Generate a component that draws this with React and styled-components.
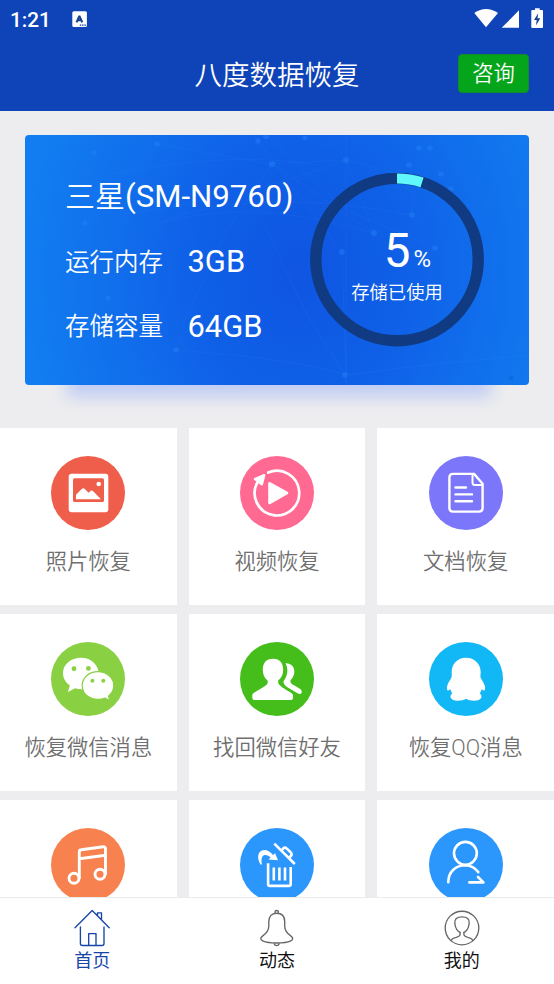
import React from "react";
import styled, { createGlobalStyle } from "styled-components";

const GlobalStyle = createGlobalStyle`
  *, *::before, *::after { box-sizing: border-box; }
  body {
    margin: 0;
    background: #ededef;
    font-family: Roboto, "Noto Sans CJK SC", sans-serif;
    font-weight: 400;
  }
  svg { display: block; flex: none; }
`;

const Screen = styled.div`
  display: flex;
  flex-direction: column;
  width: 554px;
  height: 984px;
  overflow: hidden;
  background: #ededef;
`;

const Header = styled.header`
  flex: none;
  height: 111px;
  background: #0f43b8;
  color: #fff;
`;

const StatusBar = styled.div`
  display: flex;
  align-items: center;
  height: 38px;
  padding: 0 9px 0 10px;
`;

const Clock = styled.span`
  width: 62px;
  padding-top: 1px;
  font-size: 20.8px;
  font-weight: 500;
  line-height: 38px;
`;

const StatusIcons = styled.div`
  display: flex;
  margin-left: auto;
`;

const TitleBar = styled.div`
  display: grid;
  grid-template-columns: 1fr auto 1fr;
  align-items: center;
  height: 73px;
  padding-right: 25px;
  padding-left: 25px;
`;

const Title = styled.h1`
  grid-column: 2;
  margin: 2px 0 0;
  font-size: 27.5px;
  font-weight: 350;
  line-height: 40px;
`;

const ConsultButton = styled.button`
  justify-self: end;
  width: 71px;
  height: 39px;
  margin-top: -2px;
  padding: 1px 0 0;
  border: 1px solid #16892f;
  border-radius: 4px;
  background: #05a51b;
  color: #fff;
  font: inherit;
  font-size: 21.3px;
  font-weight: 350;
  line-height: 36px;
`;

const Content = styled.main`
  flex: 1;
  min-height: 0;
  overflow: hidden;
`;

const CardWrap = styled.section`
  position: relative;
  height: 250px;
  margin: 24px 25px 43px;
  isolation: isolate;

  &::after {
    content: "";
    position: absolute;
    z-index: -1;
    right: 38px;
    bottom: -12px;
    left: 42px;
    height: 40px;
    background: rgba(96, 136, 255, 0.32);
    filter: blur(8px);
  }
`;

const Card = styled.div`
  position: relative;
  display: flex;
  justify-content: space-between;
  height: 250px;
  padding: 38px 45px 0 40px;
  overflow: hidden;
  border-radius: 4px;
  background: radial-gradient(ellipse 275px 330px at 275px 138px, #0f55e2 0%, #0f60e7 38%, #1172ed 76%, #117df1 100%);
  color: #fff;
`;

const Network = styled.svg`
  position: absolute;
  inset: 0;
`;

const Info = styled.div`
  position: relative;
  white-space: nowrap;
`;

const Device = styled.div`
  height: 48px;
  font-size: 30px;
  font-weight: 350;
  line-height: 48px;

  span { font-size: 31.2px; font-weight: 400; }
`;

const Spec = styled.div`
  display: flex;
  align-items: center;
  height: 48px;
  margin-top: 16.5px;
`;

const SpecName = styled.span`
  width: 122.5px;
  margin-top: -3px;
  font-size: 24.5px;
  font-weight: 350;
`;

const SpecValue = styled.span`
  font-size: 30.9px;
`;

const Gauge = styled.div`
  position: relative;
  width: 174px;
  height: 174px;
`;

const GaugeText = styled.div`
  position: absolute;
  inset: 0;
  display: flex;
  flex-direction: column;
  align-items: center;
  padding-top: 50px;
`;

const Percent = styled.div`
  display: flex;
  align-items: baseline;
  gap: 3px;
  padding-left: 21px;
  font-size: 47.5px;
  font-weight: 430;
  line-height: 57px;

  small { font-size: 24px; font-weight: 400; line-height: 1; }
`;

const GaugeLabel = styled.div`
  font-size: 18.3px;
  font-weight: 350;
  line-height: 26px;
`;

const Grid = styled.div`
  display: grid;
  grid-template-columns: repeat(3, 1fr);
  grid-auto-rows: 177px;
  gap: 9px 12px;
`;

const Tile = styled.div`
  display: flex;
  flex-direction: column;
  align-items: center;
  padding-top: 28px;
  background: #fff;
`;

const TileLabel = styled.span`
  margin-top: 15px;
  color: #6f6f6f;
  font-size: 21.3px;
  font-weight: 350;
  line-height: 34px;
  white-space: nowrap;
`;

const TabBar = styled.nav`
  flex: none;
  display: grid;
  grid-template-columns: repeat(3, 1fr);
  height: 87px;
  border-top: 1px solid #ebebec;
  background: #fff;
`;

const Tab = styled.div`
  display: flex;
  flex-direction: column;
  align-items: center;
  padding-top: 11px;
  color: ${(p) => (p.$active ? "#1745a8" : "#111")};
  font-size: 18px;
  line-height: 28px;

  svg { color: ${(p) => (p.$active ? "#1745a8" : "#666")}; }
`;

const Disc = ({ color, children }) => (
  <svg width="74" height="74" viewBox="0 0 74 74" fill="none" strokeLinecap="round" strokeLinejoin="round">
    <circle cx="37" cy="37" r="37" fill={color} />
    {children}
  </svg>
);

const PhotoIcon = () => (
  <Disc color="#ef5e4a">
    <rect x="17.7" y="17.7" width="39.6" height="38.6" rx="3" fill="#fff" />
    <rect x="22" y="22.2" width="31" height="23.8" rx="1.5" fill="#ef5e4a" />
    <circle cx="47.7" cy="28" r="2.3" fill="#fff" />
    <path d="M25 43.2V38.8L31 32.8Q32.3 31.5 33.6 32.8L37.5 36.7L39.8 34.8Q41 34 42.2 35.2L50 43.2Z" fill="#fff" />
  </Disc>
);

const VideoIcon = () => (
  <Disc color="#ff6992">
    <path d="M17.5 26.2A22.3 22.3 0 1 0 28.2 16.6" stroke="#fff" strokeWidth="2.7" />
    <path d="M24.2 19.2L15 23L21.8 28.2Z" fill="#fff" stroke="#fff" strokeWidth="2.4" />
    <path d="M29.7 27.5V46.7L46.8 37Z" fill="#fff" stroke="#fff" strokeWidth="3" />
  </Disc>
);

const DocumentIcon = () => (
  <Disc color="#7c76fa">
    <g stroke="#fff" strokeWidth="2.4">
      <path d="M45 17.9H24Q20.4 17.9 20.4 21.5V52Q20.4 55.6 24 55.6H50Q53.6 55.6 53.6 52V27.8Z" />
      <path d="M43.5 18V26.5Q43.5 29 46 29H53.5" strokeWidth="2" />
      <path d="M26.5 31.5H37M26.5 38.4H43M26.5 45.3H43" />
    </g>
  </Disc>
);

const WechatIcon = () => (
  <Disc color="#89d143">
    <path d="M30.3 15.7C19.8 15.7 12 22.5 12 31C12 36.3 14.6 40.5 18.8 43.3L17 50L24 46.2Q34 49 41 43.5L48 33C48 23.5 40.5 15.7 30.3 15.7Z" fill="#fff" />
    <path d="M47 29.7C37.7 29.7 31.2 35.8 31.2 43.6C31.2 51.8 38 57.3 47 57.3Q51 57.3 54 56L58.8 58.8L57.5 54.1Q62.8 50 62.8 43.6C62.8 35.8 56 29.7 47 29.7Z" fill="#fff" stroke="#89d143" strokeWidth="1.2" />
    <g fill="#89d143">
      <circle cx="23" cy="26.7" r="2.4" /><circle cx="37.4" cy="26.4" r="2.4" />
      <circle cx="41.4" cy="38.8" r="2" /><circle cx="52.3" cy="38.8" r="2" />
    </g>
  </Disc>
);

const FriendsIcon = () => (
  <Disc color="#45be1b">
    <path d="M33 16.7C26 16.7 22.8 21.3 22.8 27.5C22.8 32.3 24.2 35.5 27.5 38.4C28.7 42 26.8 43.3 14.1 50.7C12.3 51.7 12.3 52.5 12.3 54V56Q12.3 58 14.3 58H51Q53 58 53 56V54C53 52.2 52.5 51.5 50.5 50.4C40 44.6 37.6 42.4 38.2 38.6C41.7 35.7 43.2 32 43.2 27.5C43.2 21.3 40 16.7 33 16.7Z" fill="#fff" />
    <path d="M45.5 21.3C51 21 54.5 24.6 54.3 30C54.2 33.5 52.7 35.8 50.5 38.3C50.2 40.5 50.8 41.4 53 42.7L60 46.8Q61.8 48 61.8 50Q61.8 52 59.8 52Q58.8 52 57.5 51.2L47 45Q43.5 42.7 43.4 39.5C46 35.5 47.4 32.5 47.4 28.5Q47.4 25 45.5 21.3Z" fill="#fff" />
  </Disc>
);

const PenguinIcon = () => (
  <Disc color="#12b7f5">
    <path d="M37 15.7C28.3 15.7 22.7 22 22.7 30C22.7 33.2 23.2 34.3 21.7 37C19.2 41 17.3 44 18 47.5C18.3 49.1 19.5 49 21.1 47L23.2 51.4C19.8 53.4 21.3 58.7 28.5 58.7Q34.4 58.7 37 56.8Q39.6 58.7 45.5 58.7C52.7 58.7 54.2 53.4 50.8 51.4L53 47C54.6 49 55.7 49.1 56 47.5C56.7 44 54.8 41 52.3 37C50.8 34.3 51.7 33.2 51.7 30C51.7 22 45.7 15.7 37 15.7Z" fill="#fff" />
  </Disc>
);

const MusicIcon = () => (
  <Disc color="#f7814f">
    <g stroke="#fff" strokeWidth="2.9">
      <circle cx="23" cy="50.3" r="5" />
      <circle cx="49" cy="46.3" r="5" />
      <path d="M28.3 50V24Q28.3 22 30.3 21.8L52.3 18.8Q54.5 18.6 54.5 20.8V46M28.5 30.7L54.5 27.3" />
    </g>
  </Disc>
);

const TrashIcon = () => (
  <Disc color="#2b97fd">
    <g stroke="#fff" strokeWidth="2.6" strokeLinecap="butt">
      <path d="M28.1 35.3V56Q28.1 57.9 30 57.9H48.8Q50.7 57.9 50.7 56V39" />
      <path d="M33.8 39.5V52.5M39.4 39.5V52.5M45 39.5V52.5" />
      <path d="M34.3 15.7L54.8 36" />
      <path d="M41.4 22.8L43.3 20.4Q44.7 18.8 46.6 20.4L50.9 24.5Q52.5 26.4 50.6 28.2L49.2 29.8" />
    </g>
    <path d="M20.5 36.5C16.4 29.6 17.8 22.4 24 22Q28.6 21.8 33 27L35.1 25.3L38 32.2L28.4 31.6L30.7 29.4Q27.4 26.8 25 27C21.5 27.3 20.9 32 22 36.5Z" fill="#fff" />
  </Disc>
);

const ContactIcon = () => (
  <Disc color="#2b97fd">
    <g stroke="#fff" strokeWidth="2.6">
      <circle cx="36.4" cy="25.3" r="11.4" />
      <path d="M19.3 54.2C19.3 43.5 27 37.2 36.4 37.2Q44.5 37.7 49.3 44.1M40.4 54.4H54.4L49 49" />
    </g>
  </Disc>
);

const HomeIcon = () => (
  <svg width="38" height="38" viewBox="0 0 38 38" fill="none" stroke="currentColor" strokeWidth="1.35" strokeLinecap="round" strokeLinejoin="round">
    <path d="M2 18.7L19.2 1.5L36.2 18.7M7.4 18V34.5Q7.4 36.5 9.4 36.5H29Q31 36.5 31 34.5V18M15.7 36V24.6H23V36M24.5 6.5V3.8H28.5V10.5" />
  </svg>
);

const BellIcon = () => (
  <svg width="38" height="38" viewBox="0 0 38 38" fill="none" stroke="currentColor" strokeWidth="1.35" strokeLinecap="round" strokeLinejoin="round">
    <path d="M17 4.5V3Q17 1.5 18.7 1.5T20.4 3V4.5M18.7 4.2C13.2 4.2 10.8 7.9 10.8 12.5V17C10.8 21.7 8.2 24.5 4.5 27.1C2.2 28.8 2.2 30.7 4.7 31.8C8.5 33.6 13.5 34 18.7 34S29 33.6 32.8 31.8C35.3 30.7 35.3 28.8 33 27.1C29.2 24.5 26.7 21.7 26.7 17V12.5C26.7 7.9 24.2 4.2 18.7 4.2ZM16 34.2Q16.5 36.6 18.7 36.6T21.4 34.2" />
  </svg>
);

const ProfileIcon = () => (
  <svg width="38" height="38" viewBox="0 0 38 38" fill="none" stroke="currentColor" strokeWidth="1.35" strokeLinecap="round" strokeLinejoin="round">
    <circle cx="19" cy="19" r="16.8" />
    <path d="M8.2 31.6C8.5 29.8 10.5 29 13.2 28.3C17 27.2 17.2 26.3 17.2 23.5C14 22.2 12.4 18.5 11.8 14.5C11.2 10 14 7.8 19 7.8S26.8 10 26.2 14.5C25.6 18.5 24 22.2 20.8 23.5C20.8 26.3 21 27.2 24.8 28.3C27.5 29 29.5 29.8 29.8 31.6" />
  </svg>
);

const InputBadge = () => (
  <svg width="16" height="17" viewBox="0 0 16 17">
    <rect x=".3" y=".2" width="14.6" height="15.8" rx="1.6" fill="#fff" />
    <path d="M4.5 11.3L7.4 5L10.3 11.3M5.7 9.2H9.3" stroke="#173f91" strokeWidth="2" strokeLinejoin="bevel" fill="none" />
    <path d="M7.8 14.2H14" stroke="#173f91" strokeWidth="1.3" strokeDasharray="1.5 .8" />
  </svg>
);

const Signals = () => (
  <svg width="72" height="22" viewBox="0 0 72 22" fill="#fff">
    <path d="M1.3 5Q13-2.8 25 5L13 19.2Z" />
    <path d="M28.7 19.8H46V2.3Z" />
    <path d="M62 .2H66.7V2H69Q70 2 70 3V19Q70 20 69 20H59.3Q58.3 20 58.3 19V3Q58.3 2 59.3 2H62Z" />
    <path d="M65.2 5.3L61 12H63.7L63 17.5L67.3 10.2H64.5Z" fill="#173f91" />
  </svg>
);

const nodes = [
  [132, 9, 2.8], [69, 18, 2.5], [233, 6, 2.7], [241, 1, 3], [247, 29, 3.1],
  [280, 3, 2.5], [321, 25, 3], [394, 13, 2.8], [405, 13, 2.8], [384, 30, 2.8],
  [416, 39, 2.8], [426, 54, 2.8], [387, 80, 2.8], [349, 98, 3], [317, 117, 2.8],
  [410, 113, 2.7], [320, 240, 2.8], [151, 215, 2.8], [83, 163, 2.5], [60, 88, 2.5],
];

const NetworkPattern = () => (
  <Network width="504" height="250" viewBox="0 0 504 250" aria-hidden="true">
    <g fill="none" stroke="#4d9dff" strokeWidth="0.7" opacity="0.13">
      <path d="M132 9L247 29L321 25L426 54M241 0L321 75L410 113M233 6L317 117M247 29L200 99L160 185L151 215" />
      <path d="M130 90Q220 60 349 98M92 80Q215 65 321 25M133 88Q225 50 387 80M321 0V250M387 80V30M317 117L321 240" />
      <path d="M247 29L349 98L321 25M240 91L282 180L320 240M151 215Q280 225 320 240Q410 228 504 220M80 40Q210 15 290 30" />
    </g>
    <g fill="#2584f6" opacity="0.45">
      {nodes.map(([x, y, r]) => <circle key={`${x}-${y}`} cx={x} cy={y} r={r} />)}
    </g>
    <circle cx="486" cy="243" r="2.5" fill="#0864d4" opacity="0.5" />
  </Network>
);

const UsageRing = ({ percent }) => {
  const length = 2 * Math.PI * 81.2;
  return (
    <svg width="174" height="174" viewBox="0 0 174 174" fill="none">
      <circle cx="87" cy="86.5" r="81.2" stroke="#103a82" strokeWidth="11.4" />
      <circle
        cx="87" cy="86.5" r="81" stroke="#60f8fb" strokeWidth="10.2"
        strokeDasharray={`${(length * percent) / 100} ${length}`}
        transform="rotate(-90 87 86.5)"
      />
    </svg>
  );
};

const tiles = [
  ["照片恢复", PhotoIcon], ["视频恢复", VideoIcon], ["文档恢复", DocumentIcon],
  ["恢复微信消息", WechatIcon], ["找回微信好友", FriendsIcon], ["恢复QQ消息", PenguinIcon],
  ["", MusicIcon], ["", TrashIcon], ["", ContactIcon],
];

const tabs = [["首页", HomeIcon], ["动态", BellIcon], ["我的", ProfileIcon]];

export default function App() {
  return (
    <Screen>
      <GlobalStyle />
      <Header>
        <StatusBar>
          <Clock>1:21</Clock>
          <InputBadge />
          <StatusIcons><Signals /></StatusIcons>
        </StatusBar>
        <TitleBar>
          <Title>八度数据恢复</Title>
          <ConsultButton>咨询</ConsultButton>
        </TitleBar>
      </Header>
      <Content>
        <CardWrap>
          <Card>
            <NetworkPattern />
            <Info>
              <Device>三星<span>(SM-N9760)</span></Device>
              <Spec><SpecName>运行内存</SpecName><SpecValue>3GB</SpecValue></Spec>
              <Spec><SpecName>存储容量</SpecName><SpecValue>64GB</SpecValue></Spec>
            </Info>
            <Gauge>
              <UsageRing percent={5} />
              <GaugeText>
                <Percent>5<small>%</small></Percent>
                <GaugeLabel>存储已使用</GaugeLabel>
              </GaugeText>
            </Gauge>
          </Card>
        </CardWrap>
        <Grid>
          {tiles.map(([label, Icon], i) => (
            <Tile key={i}>
              <Icon />
              {label && <TileLabel>{label}</TileLabel>}
            </Tile>
          ))}
        </Grid>
      </Content>
      <TabBar>
        {tabs.map(([label, Icon], i) => (
          <Tab key={label} $active={i === 0}>
            <Icon />
            <span>{label}</span>
          </Tab>
        ))}
      </TabBar>
    </Screen>
  );
}
